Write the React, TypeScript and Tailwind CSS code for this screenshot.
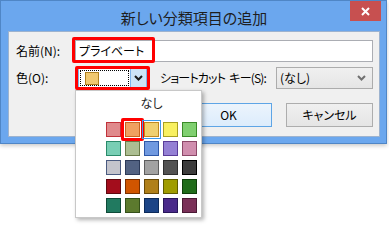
import React from 'react';

type Swatch = [string, string];

const rows: Swatch[][] = [
    [['#e08a8c', '#c0323a'], ['#f0a060', '#c86420'], ['#f0d070', '#c08a20'], ['#f8f060', '#a8a020'], ['#80d070', '#3a8a28']],
    [['#78ceb4', '#2a8a6a'], ['#acbe92', '#6a7a48'], ['#7099e0', '#2f58a8'], ['#9480d4', '#5a3c98'], ['#d08eae', '#8c4868']],
    [['#c4c4cc', '#4a5a80'], ['#526282', '#2c3a58'], ['#a2a2a2', '#5e5e5e'], ['#525252', '#2e2e2e'], ['#3c3c3c', '#000000']],
    [['#a30d1c', '#600810'], ['#d05500', '#7a3000'], ['#b0801a', '#684a08'], ['#a09c00', '#5e5c00'], ['#206c1a', '#0e3e0a']],
    [['#217a60', '#0e4a38'], ['#5c7a2e', '#34501a'], ['#1c4486', '#0c2a5a'], ['#4a2a8a', '#28165a'], ['#7a3058', '#4a1834']],
];

function Chevron({ color }: { color: string }) {
    return (
        <svg width="9" height="6" viewBox="0 0 9 6">
            <polyline points="1,1 4.5,4.5 8,1" fill="none" stroke={color} strokeWidth="2" />
        </svg>
    );
}

export default function App() {
    return (
        <div className="relative w-[389px] h-[225px] bg-white overflow-hidden font-['Noto_Sans_CJK_JP','Noto_Sans',sans-serif] [font-feature-settings:'palt'] text-[12px] text-black">
            {/* Window */}
            <div className="w-[387px] h-[144px] bg-[#6ba7ee] border border-[#4f86c6] pl-[7px] pr-[6px] flex flex-col shadow-[0_2px_4px_rgba(0,0,0,0.2)]">
                {/* Title bar */}
                <div className="relative h-[30px] flex items-center justify-center">
                    <span className="text-[15px] leading-none text-[#1e1e1e] pt-[2px]">新しい分類項目の追加</span>
                    <div className="absolute top-0 right-[-1px] w-[31px] h-[20px] bg-[#c75050] flex items-center justify-center">
                        <svg width="9" height="9" viewBox="0 0 9 9">
                            <path d="M1 1 L8 8 M8 1 L1 8" stroke="white" strokeWidth="2" />
                        </svg>
                    </div>
                </div>

                {/* Client area */}
                <div className="h-[106px] bg-[#f0f0f0] border border-[#9db3cf] pt-[8px] pl-[7px] pr-[6px] flex flex-col">
                    {/* Name */}
                    <div className="flex items-center h-[22px]">
                        <span className="w-[59px] leading-none">名前(N):</span>
                        <div className="flex-1 h-[22px] bg-white border border-[#abadb3] flex items-center pl-[3px] leading-none">プライベート</div>
                    </div>

                    {/* Color + shortcut */}
                    <div className="flex items-center h-[22px] mt-[5px]">
                        <span className="w-[62px] leading-none">色(O):</span>
                        <div className="w-[69px] h-[20px] bg-white border border-[#7eb4ea] flex">
                            <div className="flex-1 m-[1px] border border-dotted border-black flex items-center pl-[4px]">
                                <div className="w-[14px] h-[13px] bg-[#f0c870] border border-[#b08020]" />
                            </div>
                            <div className="w-[16px] bg-[#cde4f7] border-l border-[#7eb4ea] flex items-center justify-center">
                                <Chevron color="#1a1a1a" />
                            </div>
                        </div>
                        <span className="ml-[13px] w-[116px] leading-none tracking-[-0.8px] whitespace-nowrap">
                            ショートカット<span className="ml-[4px]">キー(S):</span>
                        </span>
                        <div className="flex-1 h-[22px] border border-[#acacac] bg-gradient-to-b from-[#f0f0f0] to-[#e5e5e5] flex items-center justify-between pl-[3px] pr-[6px]">
                            <span className="leading-none">(なし)</span>
                            <Chevron color="#707070" />
                        </div>
                    </div>

                    {/* Buttons */}
                    <div className="flex justify-end gap-[14px] mt-[14px]">
                        <div className="w-[87px] h-[24px] border border-[#5ea5e6] bg-gradient-to-b from-[#ecf4fc] to-[#dcecfc] flex items-center justify-center leading-none">OK</div>
                        <div className="w-[87px] h-[24px] border border-[#adadad] bg-gradient-to-b from-[#f0f0f0] to-[#e5e5e5] flex items-center justify-center leading-none">キャンセル</div>
                    </div>
                </div>
            </div>

            {/* Color dropdown popup */}
            <div className="absolute left-[75px] top-[90px] w-[127px] h-[128px] bg-white border border-[#c8c8c8] shadow-[2px_2px_4px_rgba(0,0,0,0.3)] pl-[30px] pt-[4px]">
                <div className="w-[91px] flex flex-col items-center">
                    <span className="h-[16px] leading-[16px] text-[#1e1e1e]">なし</span>
                    <div className="mt-[11px] grid grid-cols-5 gap-[4px]">
                        {rows.map((row, r) =>
                            row.map(([fill, border], c) => (
                                <div
                                    key={`${r}-${c}`}
                                    className={`relative w-[15px] h-[15px] border ${r === 0 && c === 2 ? 'outline outline-1 outline-offset-[1px] outline-[#3c9ae8]' : ''}`}
                                    style={{ backgroundColor: fill, borderColor: border }}
                                >
                                    {r === 0 && c === 1 && (
                                        <div className="absolute -inset-[5px] border-[3px] border-[#ff0000] rounded-[2px]" />
                                    )}
                                </div>
                            ))
                        )}
                    </div>
                </div>
            </div>

            {/* Annotation highlights */}
            <div className="absolute left-[72px] top-[37px] w-[83px] h-[26px] border-[3px] border-[#ff0000] rounded-[2px]" />
            <div className="absolute left-[75px] top-[66px] w-[75px] h-[24px] border-[3px] border-[#ff0000] rounded-[2px]" />
        </div>
    );
}
